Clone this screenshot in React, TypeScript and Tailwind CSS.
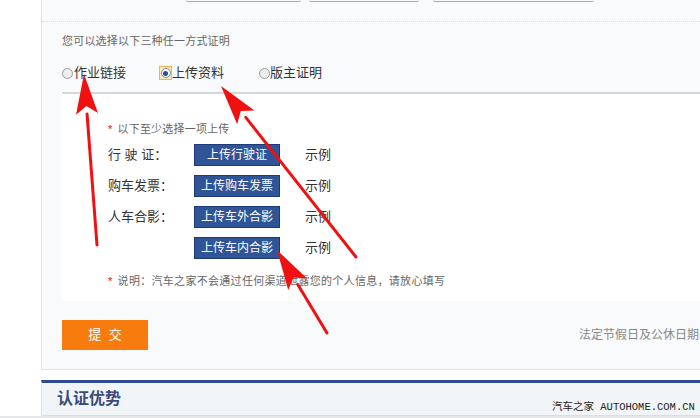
import React from "react";

const rows = [
  { label: "行 驶 证：", btn: "上传行驶证" },
  { label: "购车发票：", btn: "上传购车发票" },
  { label: "人车合影：", btn: "上传车外合影" },
  { label: "", btn: "上传车内合影" },
];

function Radio({ checked }: { checked?: boolean }) {
  if (checked) {
    return (
      <span className="inline-flex h-[14px] w-[13px] items-center justify-center border border-[#f0b060] bg-[#fde8c0]">
        <span className="flex h-[10px] w-[10px] items-center justify-center rounded-full border border-[#7a8aa0] bg-white">
          <span className="h-[5px] w-[5px] rounded-full bg-[#1f4f9a]" />
        </span>
      </span>
    );
  }
  return (
    <span className="inline-block h-[11px] w-[11px] rounded-full border border-[#9a9a9a] bg-[#eeeeee]" />
  );
}

function Arrow({ x1, y1, x2, y2 }: { x1: number; y1: number; x2: number; y2: number }) {
  const dx = x2 - x1;
  const dy = y2 - y1;
  const len = Math.hypot(dx, dy);
  const ux = dx / len;
  const uy = dy / len;
  const hl = 40;
  const hw = 11;
  const bx = x2 - ux * hl;
  const by = y2 - uy * hl;
  const px = -uy;
  const py = ux;
  return (
    <g>
      <line x1={x1} y1={y1} x2={bx} y2={by} stroke="#f01010" strokeWidth={3} strokeLinecap="round" />
      <polygon
        points={`${x2},${y2} ${bx + px * hw},${by + py * hw} ${bx + ux * 8},${by + uy * 8} ${bx - px * hw},${by - py * hw}`}
        fill="#f01010"
      />
    </g>
  );
}

export default function App() {
  return (
    <div
      className="relative h-[418px] w-[700px] overflow-hidden bg-white text-[12px] text-[#555]"
      style={{ fontFamily: '"Liberation Sans", "Noto Sans CJK SC", sans-serif' }}
    >
      <div className="flex">
        <div className="w-[41px] shrink-0" />
        <div className="min-w-0 flex-1">
          {/* 表单面板 */}
          <div className="overflow-hidden border-b border-l border-[#dfe4e8] bg-[#f8fafb]">
            <div className="relative h-[22px] border-b border-dotted border-[#d8dde2]">
              <div className="absolute left-[144px] top-0 h-[2px] w-[115px] rounded-b border-b border-[#a8a8a8]" />
              <div className="absolute left-[267px] top-0 h-[2px] w-[110px] rounded-b border-b border-[#a8a8a8]" />
              <div className="absolute left-[391px] top-0 h-[2px] w-[161px] rounded-b border-b border-[#a8a8a8]" />
            </div>

            <div className="pl-[20px]">
              <p className="mt-[11px] text-[11px] leading-[16px] tracking-[0.2px] text-[#666]">您可以选择以下三种任一方式证明</p>

              <div className="mt-[14px] flex h-[20px] items-center text-[13px] text-[#333]">
                <span className="flex items-center">
                  <Radio />
                  <span className="ml-[1px]">作业链接</span>
                </span>
                <span className="ml-[33px] flex items-center">
                  <Radio checked />
                  <span>上传资料</span>
                </span>
                <span className="ml-[35px] flex items-center">
                  <Radio />
                  <span>版主证明</span>
                </span>
              </div>

              <div className="mt-[9px] border-t-2 border-[#d6d6d6] bg-white pb-[12px] pl-[46px] pt-[27px]">
                <p className="flex items-center text-[11px] leading-[16px] tracking-[0.2px] text-[#666]">
                  <span className="mr-[5px] text-[#d01010]">*</span>以下至少选择一项上传
                </p>
                <div className="mt-[7px] flex flex-col gap-[9px]">
                  {rows.map((r, i) => (
                    <div key={i} className="flex h-[22px] items-center">
                      <span className="w-[86px] text-[13px] text-[#333]">{r.label}</span>
                      <span className="flex h-[22px] w-[86px] items-center justify-center border border-[#1d3a78] bg-[#2f5597] text-[12px] text-white">
                        {r.btn}
                      </span>
                      <span className="ml-[25px] text-[13px] text-[#333]">示例</span>
                    </div>
                  ))}
                </div>
                <p className="mt-[14px] flex items-center whitespace-nowrap text-[11px] leading-[16px] tracking-[0.3px] text-[#666]">
                  <span className="mr-[5px] text-[#d01010]">*</span>说明：汽车之家不会通过任何渠道泄露您的个人信息，请放心填写
                </p>
              </div>

              <div className="flex items-center py-[19px]">
                <span className="flex h-[30px] w-[86px] shrink-0 items-center justify-center bg-[#f77b0d] pl-[2px] text-[13px] tracking-[2px] text-white">
                  提 交
                </span>
                <span className="ml-[431px] whitespace-nowrap text-[12px] text-[#888]">法定节假日及公休日期间处理</span>
              </div>
            </div>
          </div>

          {/* 认证优势 */}
          <div className="mt-[10px] border-l border-t-[3px] border-[#2c4a8c] border-l-[#dfe4e8]">
            <div className="flex h-[33px] items-center border-b border-[#d8dee4] bg-[#f1f5f8] pl-[15px] text-[16px] font-bold text-[#394a7a]">
              认证优势
            </div>
          </div>
        </div>
      </div>
      <div className="h-[4px] bg-[#e4e6e8]" />

      {/* 水印 */}
      <div
        className="absolute left-[552px] top-[400px] whitespace-nowrap text-[10.5px] leading-[14px] text-[#222]"
        style={{ fontFamily: '"Liberation Mono", "Noto Sans CJK SC", monospace' }}
      >
        汽车之家 AUTOHOME.COM.CN
      </div>

      {/* 红色箭头 */}
      <svg className="pointer-events-none absolute left-0 top-0" width={700} height={418}>
        <Arrow x1={97} y1={245} x2={84} y2={74} />
        <Arrow x1={356} y1={257} x2={221} y2={86} />
        <Arrow x1={327} y1={333} x2={277} y2={250} />
      </svg>
    </div>
  );
}
